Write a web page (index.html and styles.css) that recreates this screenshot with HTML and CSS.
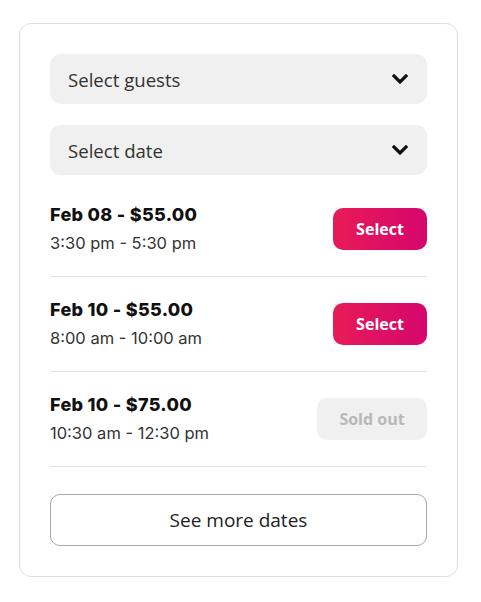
FILE: index.html
```html
<!DOCTYPE html>
<html>
<head>
<meta charset="utf-8">
<link rel="stylesheet" href="styles.css">
</head>
<body>
<div class="card">
  <div class="select">
    <span>Select guests</span>
    <svg class="chev" width="16" height="10" viewBox="0 0 16 10"><polyline points="2,2 8,8 14,2" fill="none" stroke="#111" stroke-width="3.2" stroke-linecap="square" stroke-linejoin="miter"/></svg>
  </div>
  <div class="select">
    <span>Select date</span>
    <svg class="chev" width="16" height="10" viewBox="0 0 16 10"><polyline points="2,2 8,8 14,2" fill="none" stroke="#111" stroke-width="3.2" stroke-linecap="square" stroke-linejoin="miter"/></svg>
  </div>
  <div class="rows">
    <div class="row">
      <div class="info">
        <div class="title">Feb 08 - $55.00</div>
        <div class="time">3:30 pm - 5:30 pm</div>
      </div>
      <button class="btn primary">Select</button>
    </div>
    <div class="row">
      <div class="info">
        <div class="title">Feb 10 - $55.00</div>
        <div class="time">8:00 am - 10:00 am</div>
      </div>
      <button class="btn primary">Select</button>
    </div>
    <div class="row">
      <div class="info">
        <div class="title">Feb 10 - $75.00</div>
        <div class="time">10:30 am - 12:30 pm</div>
      </div>
      <button class="btn sold">Sold out</button>
    </div>
  </div>
  <button class="more">See more dates</button>
</div>
</body>
</html>
```
FILE: styles.css
```css
body {
  margin: 0;
  background: #fff;
  font-family: "Open Sans", sans-serif;
}
.card {
  box-sizing: border-box;
  width: 439px;
  margin: 23px 0 0 19px;
  padding: 30px 30px 30px 30px;
  border: 1px solid #dedede;
  border-radius: 12px;
  display: flex;
  flex-direction: column;
}
.select {
  height: 50px;
  background: #f0f0f0;
  border-radius: 11px;
  display: flex;
  align-items: center;
  justify-content: space-between;
  padding: 0 19px 0 18px;
  font-size: 18.6px;
  color: #333;
}
.select + .select {
  margin-top: 21px;
}
.chev {
  display: block;
}
.rows {
  margin-top: 7px;
  display: flex;
  flex-direction: column;
}
.row {
  display: flex;
  align-items: center;
  justify-content: space-between;
  padding: 19px 0;
  border-bottom: 1px solid #e2e2e2;
}
.title {
  font-family: Inter, sans-serif;
  font-weight: 800;
  font-size: 18px;
  line-height: 28px;
  letter-spacing: 0.3px;
  color: #111;
}
.time {
  font-family: Inter, sans-serif;
  font-size: 16.5px;
  line-height: 28px;
  color: #333;
}
.btn {
  font-family: "Open Sans", sans-serif;
  font-weight: 700;
  font-size: 16px;
  height: 42px;
  border: none;
  border-radius: 10px;
  padding: 0;
}
.primary {
  width: 94px;
  color: #fff;
  background: linear-gradient(90deg, #e81b57, #d5066d);
}
.sold {
  width: 110px;
  color: #b8b8b8;
  background: #f0f0f0;
}
.more {
  margin-top: 27px;
  height: 52px;
  background: #fff;
  border: 1px solid #a8a8a8;
  border-radius: 10px;
  font-family: "Open Sans", sans-serif;
  font-weight: 500;
  font-size: 19px;
  color: #222;
}
```
